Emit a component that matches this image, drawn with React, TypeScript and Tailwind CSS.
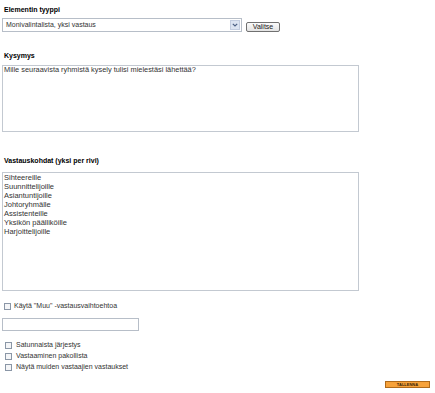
import React from "react";

const Check = ({ label, boxClass = "", textClass = "" }: { label: string; boxClass?: string; textClass?: string }) => (
  <div className="flex items-center h-[8px]">
    <span className={"block w-[7px] h-[7px] border border-[#8a96a6] bg-[#f4f5f7] " + boxClass} />
    <span className={"leading-[8px] text-[#333] " + textClass}>{label}</span>
  </div>
);

export default function App() {
  const items = [
    "Sihteereille",
    "Suunnittelijoille",
    "Asiantuntijoille",
    "Johtoryhmälle",
    "Assistenteille",
    "Yksikön päälliköille",
    "Harjoittelijoille",
  ];
  return (
    <div className="w-[435px] h-[393px] bg-white font-['Liberation_Sans',Arial,sans-serif] text-[7px] text-[#222] flex flex-col pl-[2px]">
      <div className="mt-[6px] ml-[2px] h-[8px] leading-[8px] font-bold text-black">Elementin tyyppi</div>
      <div className="mt-[4px] flex items-start">
        <div className="w-[240px] h-[14px] border border-[#b7bec8] bg-white flex items-center justify-between pl-[3px] pr-[1px]">
          <span className="text-[#333] leading-[12px]">Monivalintalista, yksi vastaus</span>
          <span className="w-[10px] h-[10px] bg-[#dce4f2] border border-[#c3cde0] flex items-center justify-center">
            <svg width="6" height="4" viewBox="0 0 6 4">
              <path d="M0.8 0.8 L3 3 L5.2 0.8" fill="none" stroke="#4d6185" strokeWidth="1.2" />
            </svg>
          </span>
        </div>
        <div className="ml-[4px] mt-[4px] w-[34px] h-[10px] border border-[#707070] rounded-[2px] bg-gradient-to-b from-[#fbfbfb] to-[#e3e3e3] flex items-center justify-center leading-[8px] text-[#222]">
          Valitse
        </div>
      </div>
      <div className="mt-[20px] ml-[2px] h-[8px] leading-[8px] font-bold text-black">Kysymys</div>
      <textarea
        className="mt-[5px] w-[357px] h-[67px] border border-[#c3c9d1] resize-none outline-none pl-[1px] pt-0 leading-[8px] text-[7.4px] text-[#333] font-['Liberation_Sans',Arial,sans-serif]"
        defaultValue="Mille seuraavista ryhmistä kysely tulisi mielestäsi lähettää?"
      />
      <div className="mt-[25px] ml-[2px] h-[8px] leading-[8px] font-bold text-black">Vastauskohdat (yksi per rivi)</div>
      <textarea
        className="mt-[7px] w-[357px] h-[119px] border border-[#c3c9d1] resize-none outline-none pl-[1px] pt-0 leading-[9px] text-[7.5px] text-[#333] font-['Liberation_Sans',Arial,sans-serif]"
        defaultValue={items.join("\n")}
      />
      <div className="mt-[11px] ml-[2px]">
        <Check label={'Käytä "Muu" -vastausvaihtoehtoa'} textClass="ml-[3px]" />
      </div>
      <div className="mt-[8px] w-[137px] h-[13px] border border-[#b7bec8] bg-white" />
      <div className="mt-[10px] ml-[3px] flex flex-col gap-[3px]">
        <Check label="Satunnaista järjestys" textClass="ml-[4px]" />
        <Check label="Vastaaminen pakollista" textClass="ml-[4px]" />
        <Check label="Näytä muiden vastaajien vastaukset" textClass="ml-[4px]" />
      </div>
      <div className="mt-[10px] flex justify-end pr-[5px]">
        <div className="w-[45px] h-[7px] bg-[#f7a23a] border border-[#b06a1a] flex items-center justify-center text-[4px] leading-[5px] font-bold text-[#3a2408]">
          TALLENNA
        </div>
      </div>
    </div>
  );
}
